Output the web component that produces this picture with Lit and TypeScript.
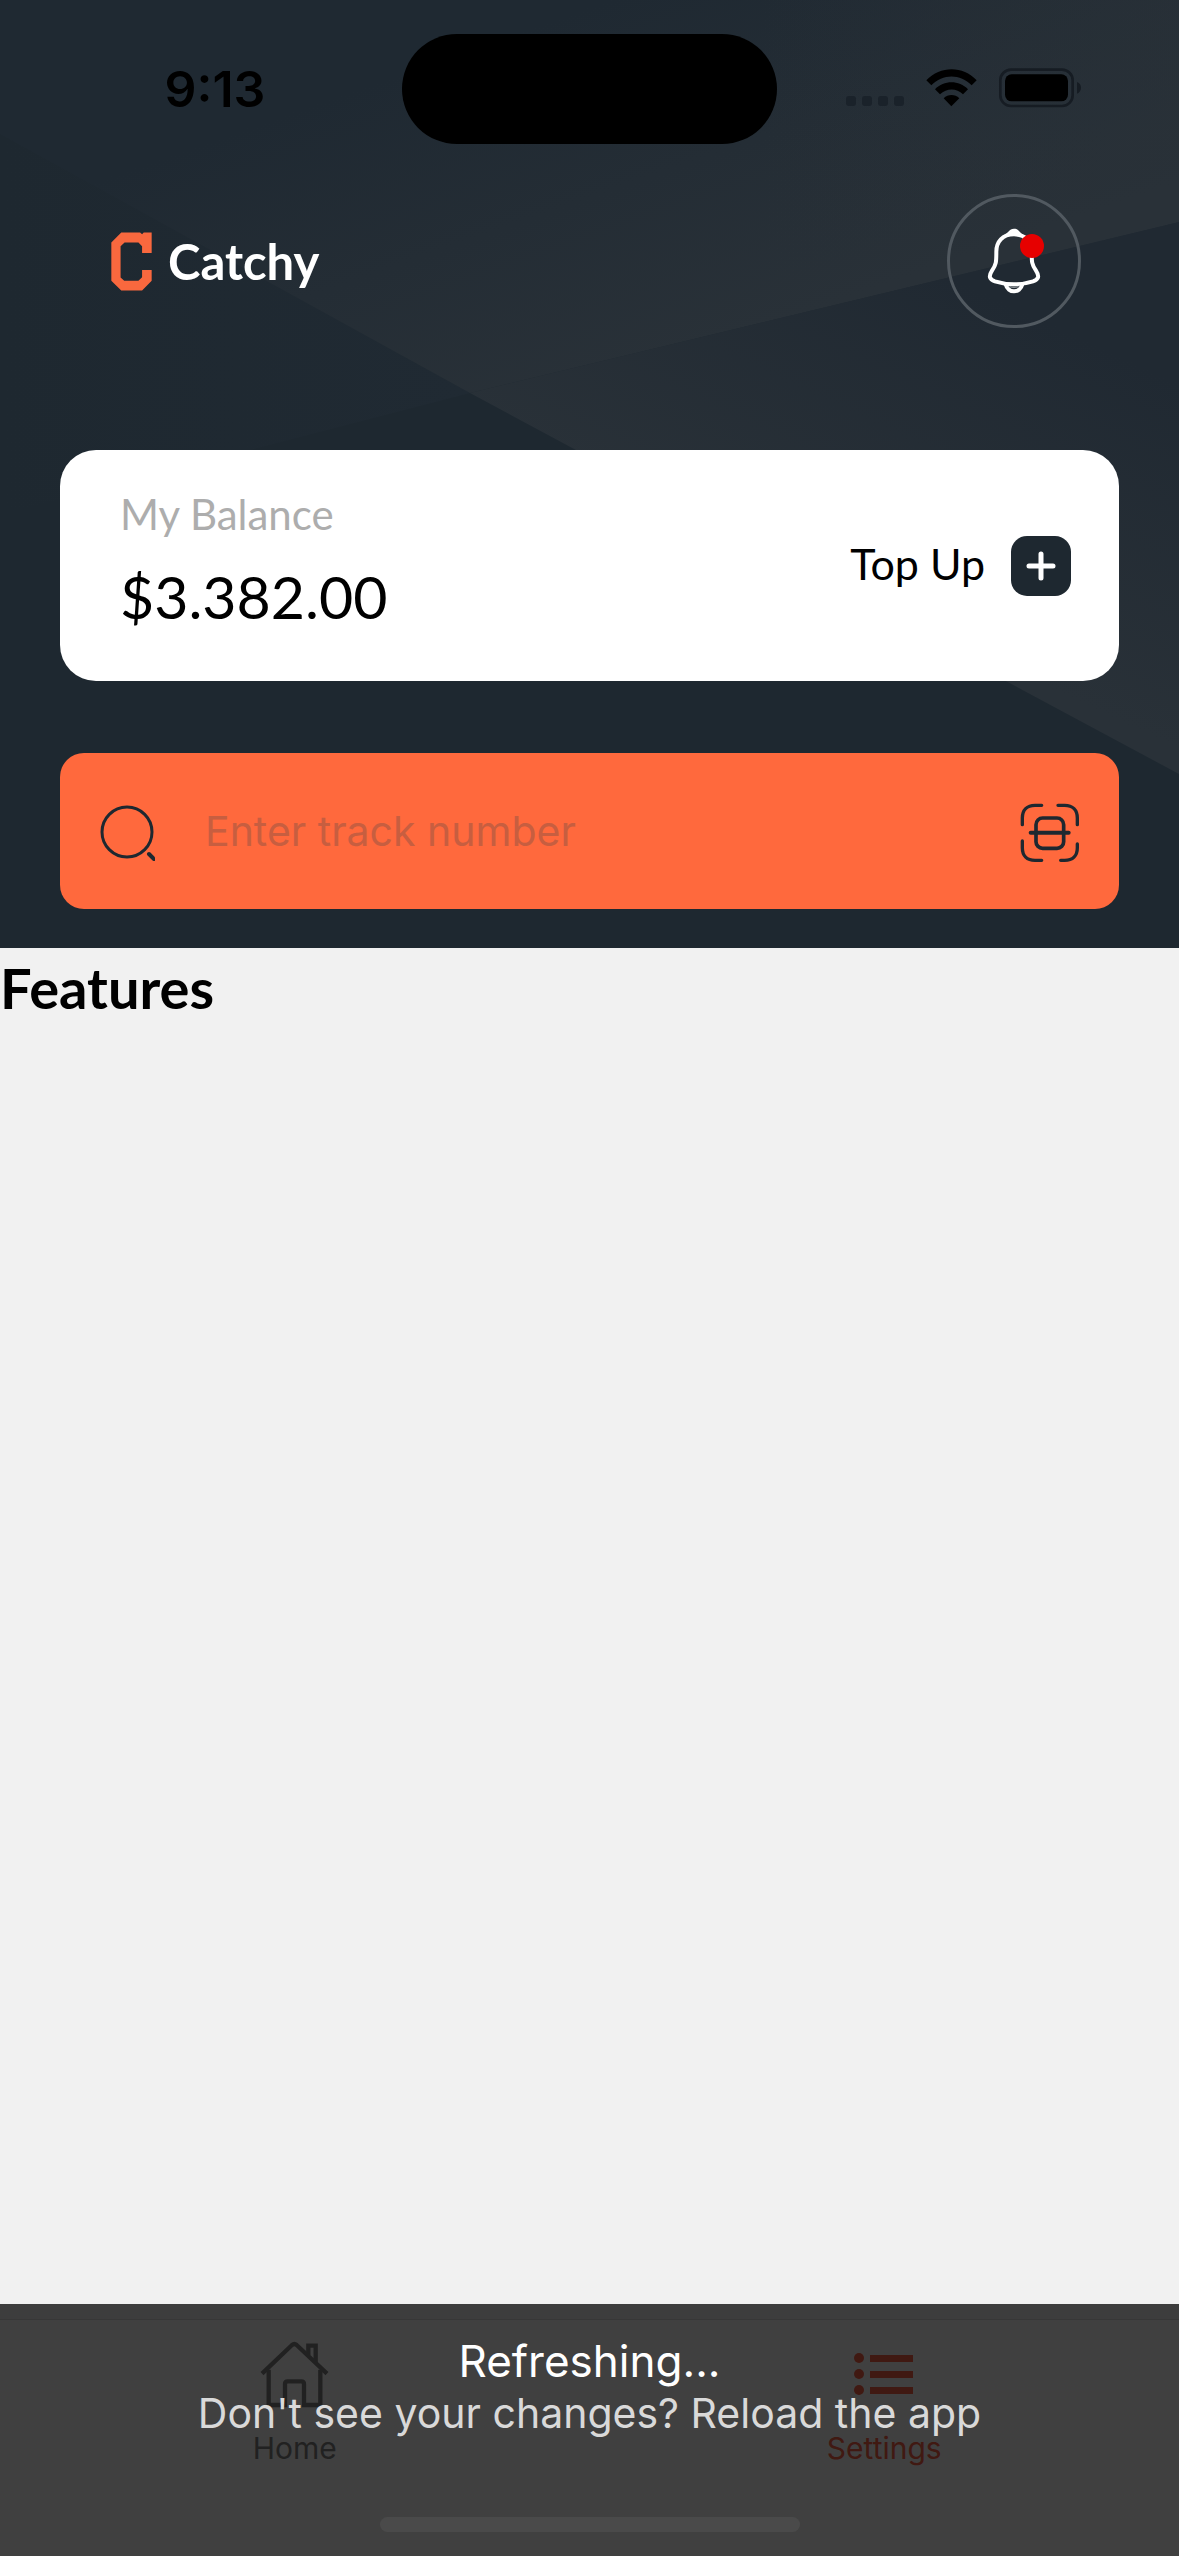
import { LitElement, html, css, svg } from "lit";
import { customElement, property } from "lit/decorators.js";

@customElement("status-bar")
class StatusBar extends LitElement {
  static styles = css`
    :host {
      display: grid;
      grid-template-columns: 1fr auto 1fr;
      padding-top: 34px;
      height: 110px;
      color: #000;
    }
    .time {
      display: flex;
      align-items: center;
      justify-content: center;
      padding-left: 28px;
      font-size: 50px;
      font-weight: 600;
    }
    .island {
      width: 375px;
      border-radius: 55px;
      background: #000;
    }
    .signals {
      display: flex;
      align-items: center;
      justify-content: flex-end;
      gap: 22px;
      padding: 0 98px 2px 0;
    }
    svg {
      display: block;
    }
  `;

  render() {
    return html`
      <div class="time">9:13</div>
      <div class="island"></div>
      <div class="signals">
        <svg width="58" height="40" viewBox="0 0 58 40" fill="#1a222a" aria-hidden="true">
          ${[0, 16, 32, 48].map((x) => svg`<rect x=${x} y="28" width="10" height="10" rx="3" />`)}
        </svg>
        <svg width="51" height="40" viewBox="288 53 153 120" aria-hidden="true">
          <path d="M289 90C331 46 399 46 440 90L425 105C391 70 338 70 304 105Z" />
          <path d="M315 117C342 89 387 89 414 117L399 132C380 113 350 113 330 132Z" />
          <path d="M341 144C354 131 375 131 388 144L364 168Z" />
        </svg>
        <svg width="82" height="40" viewBox="507 53 246 120" aria-hidden="true">
          <rect x="511" y="58" width="217" height="109" rx="32" fill="none" stroke="#161c23" stroke-width="8" />
          <rect x="525" y="72" width="189" height="81" rx="20" />
          <path d="M741 95C757 100 757 124 741 130Z" fill="#161c23" />
        </svg>
      </div>
    `;
  }
}

@customElement("tab-item")
class TabItem extends LitElement {
  @property() label = "";
  @property({ type: Boolean }) active = false;

  static styles = css`
    :host {
      flex: 1;
    }
    .tab {
      display: flex;
      flex-direction: column;
      align-items: center;
      gap: 22px;
      padding-top: 21px;
      color: #848484;
      font-size: 30px;
      line-height: 36px;
      text-decoration: none;
    }
    .active {
      color: #ff6347;
    }
    .icon {
      display: flex;
      align-items: center;
      height: 67px;
    }
  `;

  render() {
    return html`
      <a class="tab ${this.active ? "active" : ""}" href="#${this.label.toLowerCase()}">
        <span class="icon"><slot></slot></span>
        <span>${this.label}</span>
      </a>
    `;
  }
}

@customElement("app-root")
class AppRoot extends LitElement {
  static styles = css`
    :host {
      display: flex;
      flex-direction: column;
      min-height: 100vh;
      background: #f1f1f1;
      color: #000;
      font-family: Inter, "Liberation Sans", sans-serif;
    }
    svg {
      display: block;
      flex: none;
    }
    button {
      border: 0;
      padding: 0;
      background: none;
      color: inherit;
      font: inherit;
      cursor: pointer;
    }
    .header {
      position: relative;
      isolation: isolate;
      padding-bottom: 39px;
      background: #1e2830;
    }
    .rays {
      position: absolute;
      inset: 0;
      z-index: -1;
      width: 100%;
      height: 100%;
    }
    .top {
      display: flex;
      align-items: center;
      justify-content: space-between;
      margin-top: 50px;
      padding: 0 98px 0 111px;
    }
    .brand {
      display: flex;
      align-items: center;
      gap: 16px;
      color: #fff;
      font-family: Lato, sans-serif;
      font-size: 49px;
      font-weight: 700;
      line-height: 60px;
    }
    .bell {
      display: flex;
      align-items: center;
      justify-content: center;
      box-sizing: border-box;
      width: 134px;
      height: 134px;
      border: 3px solid #515960;
      border-radius: 50%;
    }
    .balance {
      display: flex;
      align-items: center;
      justify-content: space-between;
      box-sizing: border-box;
      min-height: 231px;
      margin: 122px 60px 0;
      padding: 30px 48px 30px 60px;
      border-radius: 36px;
      background: #fff;
      font-family: Lato, sans-serif;
    }
    .caption {
      color: #adadad;
      font-size: 42px;
      line-height: 66px;
    }
    .amount {
      margin-top: 8px;
      padding-bottom: 12px;
      font-size: 59px;
      line-height: 84px;
    }
    .topup {
      display: flex;
      align-items: center;
      gap: 26px;
      font-size: 43px;
    }
    .topup-label {
      padding-bottom: 4px;
    }
    .search {
      display: flex;
      align-items: center;
      box-sizing: border-box;
      height: 156px;
      margin: 72px 60px 0;
      padding: 0 39px;
      border-radius: 24px;
      background: #ff693d;
    }
    .search svg {
      padding-top: 4px;
    }
    .field {
      flex: 1;
      min-width: 0;
      margin: 0 48px 0 50px;
      padding: 0;
      border: 0;
      outline: 0;
      background: none;
      color: #1e2830;
      font: 400 41px Inter, sans-serif;
    }
    .field::placeholder {
      color: #c75e40;
      opacity: 1;
    }
    .content {
      flex: 1;
    }
    .heading {
      margin: 6px 0 0;
      font-family: Lato, sans-serif;
      font-size: 56px;
      font-weight: 700;
      line-height: 68px;
    }
    .footer {
      position: relative;
      padding-top: 15px;
    }
    .tabs {
      display: flex;
      box-sizing: border-box;
      height: 237px;
      border-top: 1px solid #dcdcdc;
      background: #fff;
    }
    .toast {
      position: absolute;
      inset: 0;
      padding-top: 31px;
      background: rgba(0, 0, 0, 0.75);
      color: #d9d9d9;
      font-size: 41px;
      line-height: 52px;
      text-align: center;
    }
    .toast-title {
      color: #fff;
      font-size: 44px;
    }
    .indicator {
      position: absolute;
      bottom: 24px;
      left: 50%;
      width: 420px;
      height: 15px;
      margin-left: -210px;
      border-radius: 8px;
      background: #4a4a4a;
    }
  `;

  render() {
    return html`
      <header class="header">
        <svg class="rays" viewBox="0 0 1179 948" preserveAspectRatio="none" aria-hidden="true">
          <defs>
            <linearGradient id="upper" gradientUnits="userSpaceOnUse" x1="440" y1="60" x2="560" y2="400">
              <stop offset="0" stop-color="#1f2932" />
              <stop offset="1" stop-color="#293138" />
            </linearGradient>
            <linearGradient id="corner" gradientUnits="userSpaceOnUse" x1="760" y1="0" x2="1179" y2="0">
              <stop offset="0" stop-color="#293138" stop-opacity="0" />
              <stop offset="1" stop-color="#293138" stop-opacity="0.6" />
            </linearGradient>
            <linearGradient id="lower" gradientUnits="userSpaceOnUse" x1="1000" y1="300" x2="860" y2="600">
              <stop offset="0" stop-color="#202932" />
              <stop offset="1" stop-color="#293138" />
            </linearGradient>
            <linearGradient id="left" gradientUnits="userSpaceOnUse" x1="0" y1="0" x2="470" y2="0">
              <stop offset="0" stop-color="#1e2830" />
              <stop offset="1" stop-color="#202a33" />
            </linearGradient>
          </defs>
          <path d="M0 134L470 393L0 515Z" fill="url(#left)" />
          <path d="M0 0H1179V222L470 393L0 134Z" fill="url(#upper)" />
          <path d="M760 0H1179V222L760 323Z" fill="url(#corner)" />
          <path d="M1179 222V774L470 393Z" fill="url(#lower)" />
        </svg>

        <status-bar></status-bar>

        <div class="top">
          <div class="brand">
            <svg width="41" height="59" viewBox="64 93 124 177" aria-hidden="true">
              <path
                fill="#f9683e"
                d="M95 94H152L158 99L163 94H187V156H158V135L147 124H105L93 135V230L104 240H147L158 229V207H187V240L158 269H95L65 240V124Z"
              />
            </svg>
            <span>Catchy</span>
          </div>
          <button class="bell" aria-label="Notifications">
            <svg width="60" height="70" viewBox="162 138 180 210" fill="none" stroke="#fff" stroke-width="12">
              <path
                d="M252 163C217 163 199 186 199 215C199 246 199 252 186 272C175 289 178 298 195 304C230 315 274 315 309 304C326 298 329 289 318 272C305 252 305 246 305 215C305 186 287 163 252 163Z"
              />
              <path d="M218 168C238 158 236 146 252 146C268 146 266 158 286 168Z" fill="#fff" stroke="none" />
              <path d="M227 313C234 341 270 341 277 313" />
              <path d="M238 320C246 322 258 322 266 320" stroke="#8d9398" stroke-width="4" />
              <circle cx="306" cy="198" r="36" fill="#e60000" stroke="none" />
            </svg>
          </button>
        </div>

        <section class="balance">
          <div>
            <div class="caption">My Balance</div>
            <div class="amount">$3.382.00</div>
          </div>
          <button class="topup">
            <span class="topup-label">Top Up</span>
            <svg width="60" height="60" viewBox="0 0 60 60" aria-hidden="true">
              <rect width="60" height="60" rx="16" fill="#1e2830" />
              <path d="M18 30H42M30 18V42" stroke="#fff" stroke-width="5" stroke-linecap="round" />
            </svg>
          </button>
        </section>

        <div class="search">
          <svg width="56" height="56" viewBox="0 0 56 56" fill="none" stroke="#1e2830" stroke-width="3" aria-hidden="true">
            <circle cx="28" cy="27" r="25" />
            <path d="M50 49L55 54" stroke-width="4" stroke-linecap="round" />
          </svg>
          <input class="field" type="text" placeholder="Enter track number" aria-label="Track number" />
          <button aria-label="Scan code">
            <svg
              width="60" height="60" viewBox="121 102 180 180"
              fill="none" stroke="#1e2830" stroke-width="10" stroke-linecap="round"
            >
              <path d="M186 109H166C142 109 128 123 128 147V167" />
              <path d="M235 109H255C279 109 293 123 293 147V167" />
              <path d="M128 216V236C128 260 142 274 166 274H186" />
              <path d="M293 225V236C293 260 279 274 255 274H243" />
              <rect x="169" y="147" width="83" height="91" rx="20" stroke-width="11" />
              <path d="M153 191H267" stroke-width="12" />
            </svg>
          </button>
        </div>
      </header>

      <main class="content">
        <h2 class="heading">Features</h2>
      </main>

      <footer class="footer">
        <nav class="tabs">
          <tab-item label="Home">
            <svg width="69" height="67" viewBox="240 152 207 201" fill="none" stroke="currentColor" stroke-width="13">
              <path d="M246 250L336 164Q343 158 350 164L441 250" />
              <path d="M266 238V344H315V281Q315 273 323 273H364Q372 273 372 281V344H421V238" />
              <path d="M385 194V166H407V216" />
            </svg>
          </tab-item>
          <tab-item label="Settings" active>
            <svg width="60" height="44" viewBox="0 0 60 44" fill="currentColor">
              ${[5, 21, 37].map(
                (y) => svg`<circle cx="5" cy=${y} r="5" /><rect x="16" y=${y - 3} width="43" height="7" />`,
              )}
            </svg>
          </tab-item>
        </nav>
        <div class="toast" role="status">
          <div class="toast-title">Refreshing...</div>
          <div>Don't see your changes? Reload the app</div>
        </div>
        <div class="indicator"></div>
      </footer>
    `;
  }
}
